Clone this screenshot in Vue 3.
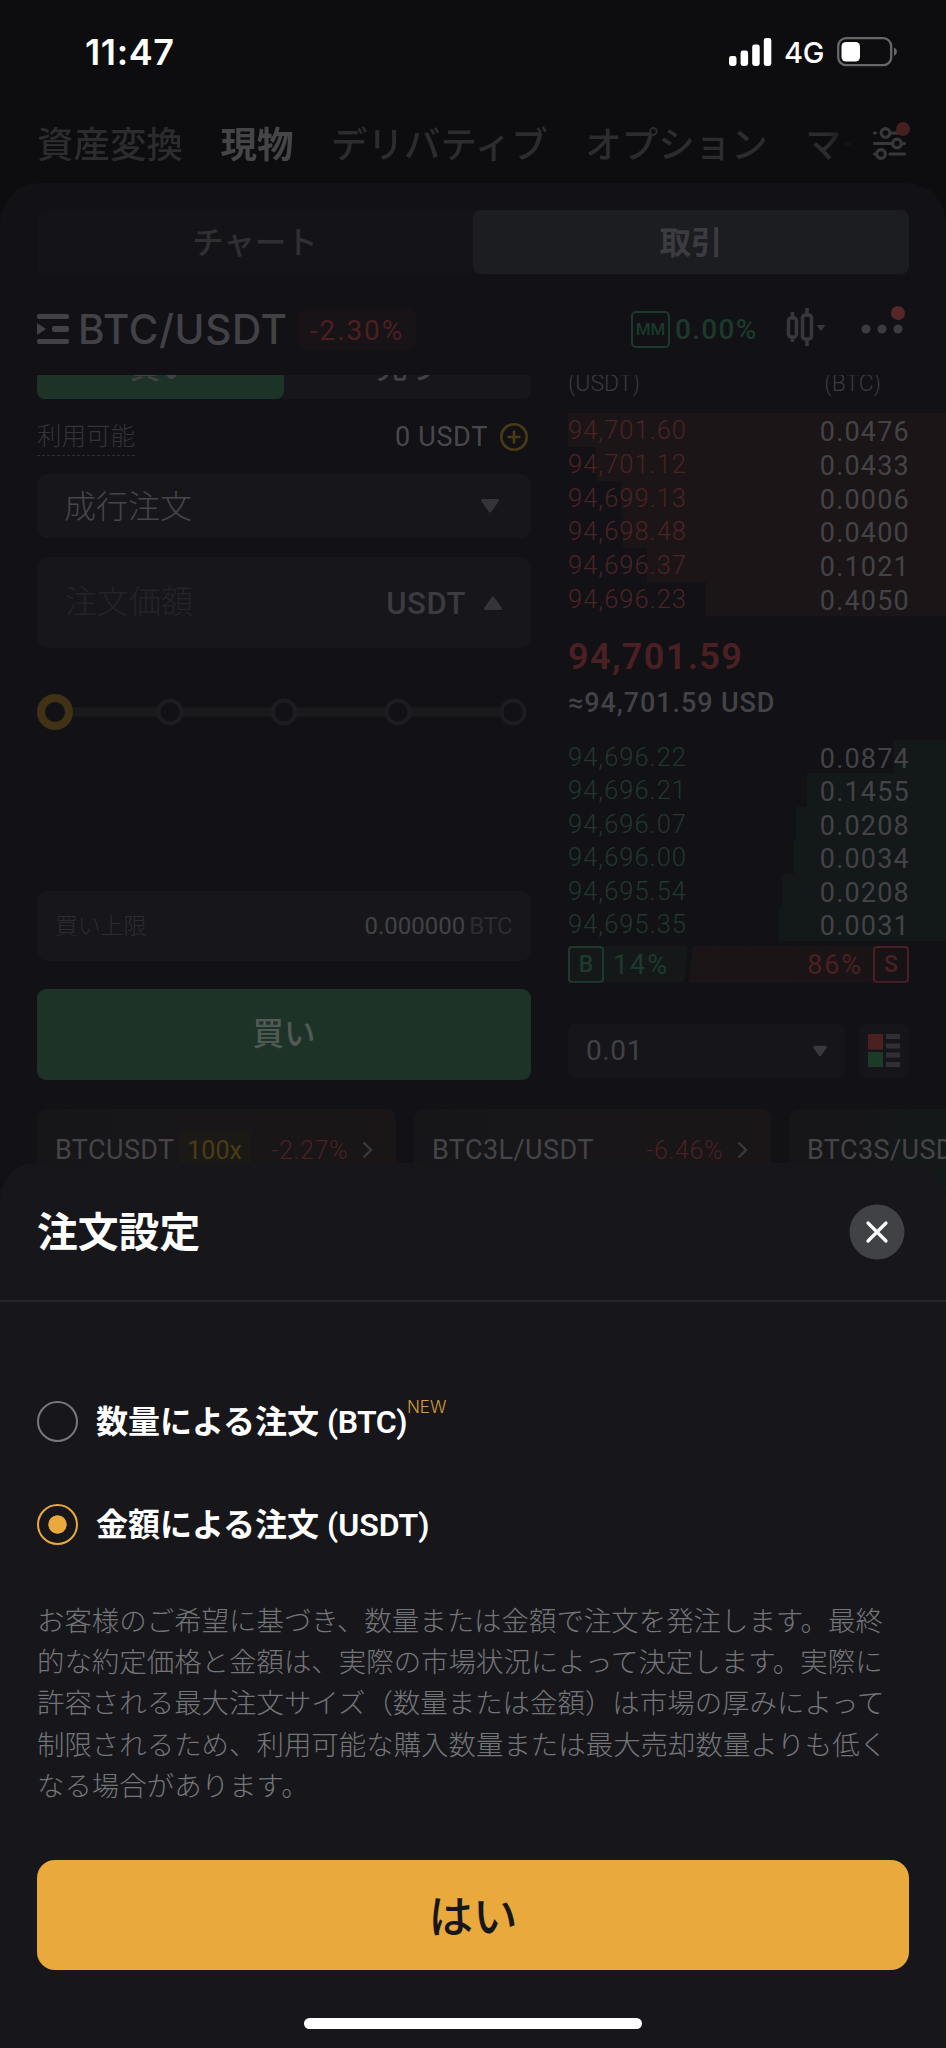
<script setup>
const tabs = [
  { label: '資産変換' },
  { label: '現物', active: true },
  { label: 'デリバティブ' },
  { label: 'オプション' },
  { label: 'マージン' },
]
const asks = [
  { price: '94,701.60', amount: '0.0476', depth: 378 },
  { price: '94,701.12', amount: '0.0433', depth: 350 },
  { price: '94,699.13', amount: '0.0006', depth: 325 },
  { price: '94,698.48', amount: '0.0400', depth: 323 },
  { price: '94,696.37', amount: '0.1021', depth: 299 },
  { price: '94,696.23', amount: '0.4050', depth: 240 },
]
const bids = [
  { price: '94,696.22', amount: '0.0874', depth: 52 },
  { price: '94,696.21', amount: '0.1455', depth: 139 },
  { price: '94,696.07', amount: '0.0208', depth: 150 },
  { price: '94,696.00', amount: '0.0034', depth: 152 },
  { price: '94,695.54', amount: '0.0208', depth: 164 },
  { price: '94,695.35', amount: '0.0031', depth: 167 },
]
const stops = [170, 284, 398, 513]
const note = [
  'お客様のご希望に基づき、数量または金額で注文を発注します。最終',
  '的な約定価格と金額は、実際の市場状況によって決定します。実際に',
  '許容される最大注文サイズ（数量または金額）は市場の厚みによって',
  '制限されるため、利用可能な購入数量または最大売却数量よりも低く',
  'なる場合があります。',
]
</script>

<template>
  <div class="phone">
    <header class="status">
      <span class="time">11:47</span>
      <div class="signals">
        <svg width="43" height="28" viewBox="0 0 43 28" fill="#fff">
          <rect x="0" y="18" width="7.5" height="10" rx="2.4" />
          <rect x="11.6" y="12.500" width="7.500" height="15.500" rx="2.4" />
          <rect x="23.2" y="6.500" width="7.500" height="21.500" rx="2.4" />
          <rect x="34.800" y="0" width="7.500" height="28" rx="2.4" />
        </svg>
        <span class="net">4G</span>
        <svg width="61" height="30" viewBox="0 0 61 30">
          <rect x="1.200" y="1.200" width="53" height="27" rx="8" fill="none" stroke="#66676a" stroke-width="2.300" />
          <rect x="4.500" y="5" width="18.500" height="19.500" rx="4.500" fill="#fff" />
          <path d="M57 10.500q3 1.500 3 4.300t-3 4.300z" fill="#66676a" />
        </svg>
      </div>
    </header>

    <nav class="tabs">
      <div class="tablist">
        <span v-for="t in tabs" :key="t.label" :class="{ active: t.active }">{{ t.label }}</span>
      </div>
      <svg class="filter" width="40" height="42" viewBox="0 0 40 42" fill="none" stroke="#38383b" stroke-width="3.200">
        <circle cx="14.500" cy="14" r="4.300" />
        <circle cx="26" cy="24.500" r="4.300" />
        <circle cx="10" cy="35" r="4.300" />
        <path d="M3.500 14h1M20 14h14M3.500 24.500h17M32 24.500h1.500M3.500 35h1.500M19 35h14.500" stroke-linecap="round" />
        <circle cx="32" cy="10" r="7" fill="#471f20" stroke="none" />
      </svg>
    </nav>

    <main class="panel">
      <div class="segment">
        <span>チャート</span>
        <span class="on">取引</span>
      </div>

      <div class="pair">
        <svg width="32" height="30" viewBox="0 0 32 30" fill="#414146">
          <rect width="32" height="5" rx="2" /><rect x="15" y="12" width="17" height="6" rx="2" />
          <rect y="25" width="32" height="5" rx="2" /><path d="M0 9v12l9-6z" />
        </svg>
        <span class="symbol">BTC/USDT</span>
        <span class="change">-2.30%</span>
        <span class="mm">MM</span>
        <span class="fee">0.00%</span>
        <svg class="candles" width="40" height="38" viewBox="0 0 40 38" fill="none" stroke="#38383c" stroke-width="3.600">
          <rect x="2.500" y="10" width="8" height="19" rx="3" />
          <rect x="16.500" y="7" width="9" height="24" rx="3" />
          <path d="M6.500 4v6M6.500 29v5M21 0v7M21 31v7" />
          <path d="M30.500 17h9l-4.500 6z" fill="#38383c" stroke="none" />
        </svg>
        <svg class="more" width="46" height="42" viewBox="0 0 46 42" fill="#3b3b40">
          <circle cx="6" cy="26" r="4.600" /><circle cx="22" cy="26" r="4.600" /><circle cx="38" cy="26" r="4.600" />
          <circle cx="38" cy="10" r="7" fill="#572728" />
        </svg>
      </div>

      <div class="content">
        <section class="form">
          <div class="sides">
            <span class="buy">買い</span><span>売り</span>
          </div>
          <div class="available">
            <span class="label">利用可能</span>
            <span class="value">0 USDT</span>
            <svg width="30" height="30" viewBox="0 0 30 30" fill="none" stroke="#493b16" stroke-width="2.600">
              <circle cx="15" cy="15" r="12.700" /><path d="M15 8.500v13M8.500 15h13" />
            </svg>
          </div>
          <div class="field type">
            <span>成行注文</span>
            <svg width="20" height="14" viewBox="0 0 20 14"><path d="M2.500 1.500h15L10 12z" fill="#343439" stroke="#343439" stroke-width="3" stroke-linejoin="round" /></svg>
          </div>
          <div class="field amount">
            <span class="placeholder">注文価額</span>
            <span class="unit">USDT</span>
            <svg width="20" height="14" viewBox="0 0 20 14"><path d="M2.500 12.500h15L10 2z" fill="#343439" stroke="#343439" stroke-width="3" stroke-linejoin="round" /></svg>
          </div>
          <svg class="slider" width="494" height="38" viewBox="37 693 494 38">
            <path d="M73 712H500" stroke="#1a1a1d" stroke-width="9" />
            <circle v-for="x in stops" :key="x" :cx="x" cy="712" r="11.500" fill="#121116" stroke="#1d1d21" stroke-width="4" />
            <circle cx="55" cy="712" r="14" fill="#121116" stroke="#413215" stroke-width="8" />
          </svg>
          <div class="field limit">
            <span class="cap">買い上限</span>
            <span class="max">0.000000 <i>BTC</i></span>
          </div>
          <button class="submit">買い</button>
        </section>

        <section class="book">
          <div class="heads"><span>(USDT)</span><span>(BTC)</span></div>
          <div class="rows asks">
            <div v-for="r in asks" :key="r.price" class="row">
              <div class="depth" :style="{ width: r.depth + 'px' }"></div>
              <span class="price">{{ r.price }}</span><span class="qty">{{ r.amount }}</span>
            </div>
          </div>
          <div class="last">94,701.59</div>
          <div class="approx">≈94,701.59 USD</div>
          <div class="rows bids">
            <div v-for="r in bids" :key="r.price" class="row">
              <div class="depth" :style="{ width: r.depth + 'px' }"></div>
              <span class="price">{{ r.price }}</span><span class="qty">{{ r.amount }}</span>
            </div>
          </div>
          <div class="ratio">
            <div class="b"><b>B</b><span>14%</span></div>
            <div class="s"><span>86%</span><b>S</b></div>
          </div>
          <div class="precision">
            <div class="step">
              <span>0.01</span>
              <svg width="16" height="12" viewBox="0 0 16 12"><path d="M2.500 2h11L8 10z" fill="#39393e" stroke="#39393e" stroke-width="2.500" stroke-linejoin="round" /></svg>
            </div>
            <div class="mode">
              <svg width="32" height="34" viewBox="0 0 32 34" fill="#303034">
                <rect width="15" height="15.500" fill="#4a2021" /><rect y="18" width="15" height="15" fill="#1d3a29" />
                <rect x="18" width="14" height="5" /><rect x="18" y="9.500" width="14" height="5" />
                <rect x="18" y="18.500" width="14" height="5" /><rect x="18" y="28" width="14" height="5" />
              </svg>
            </div>
          </div>
        </section>
      </div>

      <div class="cards">
        <div class="card c1">
          <span class="name">BTCUSDT</span><span class="lev">100x</span><span class="pct">-2.27%</span>
          <svg width="11" height="18" viewBox="0 0 11 18"><path d="M1.500 1.500 9 9l-7.500 7.500" fill="none" stroke="#3a3a3d" stroke-width="2.400" /></svg>
        </div>
        <div class="card c2">
          <span class="name">BTC3L/USDT</span><span class="pct">-6.46%</span>
          <svg width="11" height="18" viewBox="0 0 11 18"><path d="M1.500 1.500 9 9l-7.500 7.500" fill="none" stroke="#3a3a3d" stroke-width="2.400" /></svg>
        </div>
        <div class="card c3"><span class="name">BTC3S/USDT</span></div>
      </div>
    </main>

    <section class="sheet">
      <div class="head">
        <h2>注文設定</h2>
        <svg width="56" height="56" viewBox="0 0 56 56">
          <circle cx="28" cy="28" r="27.500" fill="#414246" />
          <path d="M19 19l18 18M37 19L19 37" stroke="#fff" stroke-width="3.200" stroke-linecap="round" />
        </svg>
      </div>
      <div class="options">
        <label class="option"><span class="radio"></span><span class="text">数量による注文 <em class="btc">(BTC)</em></span><sup>NEW</sup></label>
        <label class="option"><span class="radio checked"></span><span class="text">金額による注文 <em class="usdt">(USDT)</em></span></label>
      </div>
      <p class="note"><span v-for="l in note" :key="l">{{ l }}</span></p>
      <button class="confirm">はい</button>
      <div class="home"></div>
    </section>
  </div>
</template>

<style>
body { margin: 0; background: #0d0d0f; }
</style>

<style scoped>
* { box-sizing: border-box; }
.phone { position: relative; width: 946px; height: 2048px; overflow: hidden; display: flex; flex-direction: column; background: #0d0d0f; color: #414146; font-family: Roboto, "Noto Sans CJK JP", sans-serif; white-space: nowrap; }
svg { display: block; flex: none; }
button { border: 0; padding: 0; font-family: inherit; }
i, em { font-style: normal; }

.status { height: 104px; flex: none; display: flex; justify-content: space-between; padding: 0 48px 0 85px; color: #fff; font-family: Inter, sans-serif; }
.time { font-size: 36px; font-weight: 600; line-height: 104px; letter-spacing: 0.600px; }
.signals { display: flex; align-items: center; height: 104px; }
.net { font-size: 29px; font-weight: 500; margin: 0 13px 0 12px; letter-spacing: -0.4px; }

.tabs { height: 79px; flex: none; display: flex; align-items: center; padding-left: 37px; color: #2c2c2e; }
.tablist { display: flex; gap: 37.500px; width: 818px; padding-top: 4px; overflow: hidden; font-size: 36.500px; line-height: 54px; font-weight: 500; -webkit-mask-image: linear-gradient(90deg, #000 790px, transparent 817px); mask-image: linear-gradient(90deg, #000 790px, transparent 817px); }
.tablist .active { color: #454548; font-weight: 700; }
.filter { margin: -8px 0 0 16px; }

.panel { flex: 1; background: #121116; border-radius: 40px 40px 0 0; padding-top: 27px; }
.segment { display: flex; margin: 0 37px; height: 64px; border-radius: 8px; background: #141418; font-size: 31.500px; font-weight: 500; color: #303034; }
.segment span { flex: 1; text-align: center; line-height: 66px; padding-top: 1px; border-radius: 8px; }
.segment .on { background: #1c1d21; color: #3b3b40; font-weight: 700; }

.pair { height: 101px; display: flex; align-items: center; padding: 9px 0 0 37px; }
.symbol { font: 500 40.500px/50px Inter, sans-serif; margin-left: 9px; padding-top: 2px; width: 220px; letter-spacing: 0.600px; }
.change { width: 118px; height: 41px; border-radius: 8px; background: #181316; color: #4a2022; text-align: center; font-size: 28px; line-height: 43px; letter-spacing: 1.900px; }
.mm { margin-left: 215px; width: 39px; height: 37px; border: 2.500px solid #1b3a2b; border-radius: 5px; color: #1b3a2b; font-size: 17px; font-weight: 500; line-height: 33px; text-align: center; }
.fee { width: 116px; padding-left: 5px; color: #1b3a2b; font-size: 28px; font-weight: 500; letter-spacing: 1.300px; }
.candles { margin-top: -5px; }
.more { margin: -10px 0 0 34px; }

.content { display: flex; height: 705px; overflow: hidden; }
.form { width: 568px; padding-left: 37px; }
.sides { display: flex; width: 494px; height: 62px; margin-top: -38px; border-radius: 8px; background: #17171b; font-size: 31px; font-weight: 500; line-height: 61px; color: #414146; }
.sides span { flex: 1; text-align: center; border-radius: 8px; }
.sides .buy { background: #1e3328; }
.available { display: flex; align-items: flex-start; height: 75px; padding-top: 23px; width: 494px; }
.available .label { font-size: 24.500px; font-weight: 300; line-height: 30px; border-bottom: 1.500px dashed #303034; color: #343438; height: 34px; }
.available .value { margin-left: auto; margin-right: 11px; font-size: 27px; line-height: 30px; letter-spacing: 0.700px; color: #48484c; }
.available svg { margin-right: 2px; }
.field { width: 494px; display: flex; align-items: center; background: #17171b; border-radius: 10px; }
.type { height: 64px; padding: 0 31px 0 27px; font-size: 32px; font-weight: 300; justify-content: space-between; color: #45454a; }
.type span { margin-top: -4px; }
.amount { height: 91px; margin-top: 19px; padding: 0 28px; font-size: 32px; }
.placeholder { font-weight: 300; color: #242428; margin-top: -8px; }
.unit { margin: 2px 17px 0 auto; font-size: 31px; font-weight: 500; letter-spacing: 0.600px; color: #3b3b40; }
.slider { margin-top: 45px; }
.limit { height: 70px; margin-top: 160px; padding: 0 19px 0 18px; justify-content: space-between; font-size: 22.800px; font-weight: 300; color: #2c2c31; }
.cap { margin-top: -3px; }
.max { font-size: 24px; font-weight: 400; color: #424246; }
.max i { color: #2c2c31; margin-left: -2px; letter-spacing: -0.5px; }
.submit { display: block; width: 494px; height: 91px; margin-top: 28px; border-radius: 9px; background: #1e3328; color: #505a54; font-size: 31.500px; font-weight: 500; line-height: 86px; }

.book { width: 378px; }
.heads { display: flex; justify-content: space-between; padding-right: 65px; height: 38px; line-height: 17px; font-size: 23px; font-weight: 300; color: #3a3a3f; }
.row { position: relative; height: 33.800px; display: flex; justify-content: space-between; padding-right: 37px; }
.depth { position: absolute; right: 0; top: 0; bottom: 0; }
.asks .depth { background: #1b1517; }
.bids .depth { background: #131818; }
.price { position: relative; font-size: 25.500px; font-weight: 300; line-height: 35px; letter-spacing: 1px; }
.qty { position: relative; font-size: 27px; line-height: 38px; letter-spacing: 1.200px; margin-right: -1px; color: #434347; }
.asks .price { color: #4b2325; }
.bids .price { color: #20382d; }
.bids .row { height: 33.500px; }
.last { margin-top: 14px; height: 54px; line-height: 54px; font-size: 36px; font-weight: 600; letter-spacing: 1.400px; color: #4b2022; }
.approx { height: 56px; line-height: 38px; font-size: 27px; font-weight: 500; letter-spacing: 0.900px; color: #434347; }
.ratio { display: flex; gap: 1px; width: 341px; height: 37px; margin-top: 5px; font-size: 27px; line-height: 38px; letter-spacing: 1.900px; }
.ratio b { width: 36px; height: 37px; border: 2px solid; border-radius: 4px; font-size: 23px; font-weight: 500; line-height: 33px; text-align: center; letter-spacing: 0; }
.ratio .b { width: 120px; display: flex; gap: 9px; color: #1e3a2d; background: #141819; clip-path: polygon(0 0, 100% 0, 116px 100%, 0 100%); border-radius: 4px; }
.ratio .s { flex: 1; display: flex; justify-content: flex-end; gap: 10px; color: #4a2024; background: linear-gradient(90deg, #1b1517, #1b1416 75%, #151215); clip-path: polygon(4px 0, 100% 0, 100% 100%, 0 100%); border-radius: 4px; }
.precision { display: flex; gap: 14px; margin-top: 41px; }
.step { width: 277px; height: 54px; display: flex; align-items: center; justify-content: space-between; padding: 0 17px 0 18px; border-radius: 8px; background: #16161a; font-size: 28px; letter-spacing: 0.600px; }
.mode { width: 50px; height: 54px; border-radius: 8px; background: #16161a; display: flex; align-items: center; justify-content: center; }

.cards { display: flex; gap: 18px; margin-top: 29px; padding-left: 37px; overflow: hidden; }
.card { flex: none; height: 82px; display: flex; align-items: center; border-radius: 9px; padding-left: 18px; background: linear-gradient(90deg, #161618, #1a1618); }
.c1 { width: 359px; } .c2 { width: 357px; } .c3 { width: 358px; background: linear-gradient(90deg, #161618 20%, #131a19 50%); }
.name { font-size: 27px; color: #454548; letter-spacing: 0.400px; }
.lev { margin-left: 4px; width: 72px; height: 41px; border-radius: 6px; background: #1b1916; color: #4b3b16; text-align: center; font-size: 25px; line-height: 42px; }
.pct { margin-left: auto; margin-right: 14px; font-size: 25px; font-weight: 300; color: #4a2024; letter-spacing: 0.600px; }
.card svg { margin-right: 23px; }

.sheet { position: absolute; left: 0; right: 0; bottom: 0; height: 885px; border-radius: 36px 36px 0 0; background: #17171b; display: flex; flex-direction: column; }
.head { height: 139px; border-bottom: 2px solid #25272a; display: flex; align-items: center; justify-content: space-between; padding: 0 41px 0 37px; color: #fff; }
h2 { margin: 3px 0 0; font-size: 40.800px; font-weight: 700; line-height: 60px; }
.options { padding: 68px 37px 0; }
.option { height: 103px; display: flex; align-items: center; color: #fff; font-size: 32px; font-weight: 600; }
.radio { width: 41px; height: 41px; flex: none; border: 2px solid #77787b; border-radius: 50%; margin-right: 18px; }
.checked { border-color: #e9a93c; background: radial-gradient(circle, #e9a93c 8.800px, transparent 9.500px); }
.text { margin-top: -5px; }
.btc { letter-spacing: -0.5px; }
sup { font: 300 17px/20px Inter, sans-serif; color: #d39b3b; margin: -29px 0 0 0; }
.note { margin: 23px 37px 0; color: #747578; font-size: 27.450px; font-weight: 300; line-height: 41.200px; font-family: "Noto Sans CJK JP", sans-serif; }
.note span { display: block; }
.confirm { margin: 55px 37px 0; height: 110px; flex: none; border-radius: 18px; background: #e9a93c; color: #17171b; font-size: 44.500px; font-weight: 500; line-height: 110px; padding-top: 3px; }
.home { width: 338px; height: 11px; flex: none; border-radius: 6px; background: #fff; margin: auto auto 19px; }
</style>
